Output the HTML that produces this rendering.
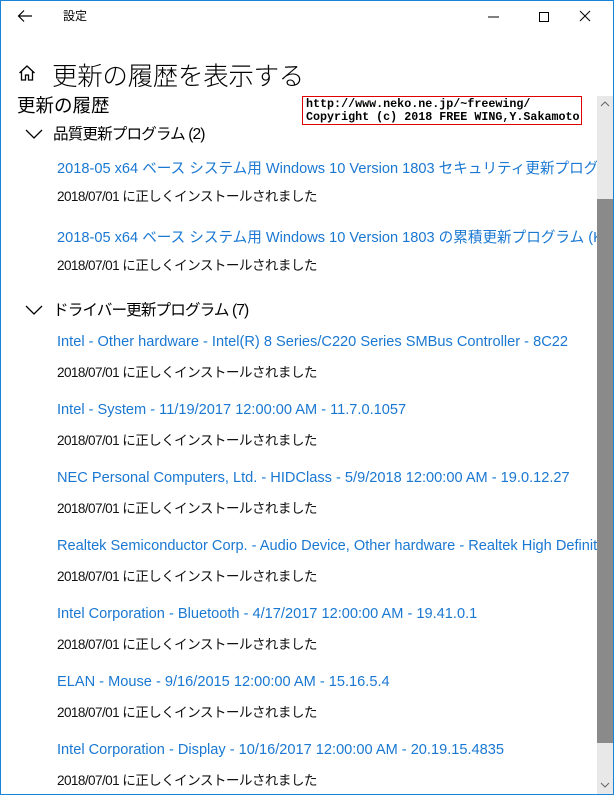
<!DOCTYPE html>
<html><head><meta charset="utf-8"><style>
*{margin:0;padding:0;box-sizing:border-box}
body{width:614px;height:795px;overflow:hidden;background:#fff;font-family:"Segoe UI","Liberation Sans","Noto Sans CJK JP",sans-serif;position:relative;color:#000}
.frame{position:absolute;left:0;top:0;width:614px;height:795px;border:1px solid #1883d7}
.a{position:absolute;white-space:nowrap}
.link{color:#1a78d2;font-size:14.6px;left:57px}
.st{font-size:13.6px;letter-spacing:-0.6px;left:57px;color:#111}
.hdr{font-size:15.6px;letter-spacing:-0.9px;left:53px}
</style></head><body>
<div class="frame"></div>
<svg class="a" style="left:17px;top:9px" width="16" height="14"><path d="M15 7H2M7 1.5L1.5 7L7 12.5" fill="none" stroke="#000" stroke-width="1.2"/></svg>
<div class="a" style="left:63px;top:7px;font-size:12px">設定</div>
<svg class="a" style="left:484px;top:10px" width="100" height="14"><path d="M4 7h11" stroke="#000" stroke-width="1"/><rect x="55.5" y="2.5" width="9" height="9" fill="none" stroke="#000"/></svg>
<svg class="a" style="left:579px;top:10px" width="12" height="12"><path d="M1 1L11 11M11 1L1 11" stroke="#000" stroke-width="1"/></svg>
<svg class="a" style="left:18px;top:64px" width="18" height="18"><path d="M1.5 9L9 2L16.5 9M3.5 7.5V16H7.5V11H10.5V16H14.5V7.5" fill="none" stroke="#000" stroke-width="1.3"/></svg>
<div class="a" style="left:52px;top:56px;font-size:25.5px;font-weight:300;letter-spacing:-0.3px">更新の履歴を表示する</div>
<div class="a" style="left:17px;top:92px;font-size:18.5px">更新の履歴</div>
<div class="a" style="left:302px;top:96px;width:280px;height:29px;border:1px solid #e00000;background:#fff;font-family:'Liberation Mono',monospace;font-size:11.7px;font-weight:bold;line-height:13px;padding:1px 3px">http://www.neko.ne.jp/~freewing/<br>Copyright (c) 2018 FREE WING,Y.Sakamoto</div>
<div class="a" style="left:597px;top:96px;width:16px;height:698px;background:#e8e8e8"></div>
<div class="a" style="left:597px;top:199px;width:16px;height:544px;background:#8a8a8a"></div>
<svg class="a" style="left:600px;top:100px" width="10" height="8"><path d="M1 6L5 2L9 6" fill="none" stroke="#666"/></svg>
<svg class="a" style="left:600px;top:781px" width="10" height="8"><path d="M1 2L5 6L9 2" fill="none" stroke="#666"/></svg>
<div style="position:absolute;left:0;top:0;width:597px;height:795px;overflow:hidden">
<svg class="a" style="left:25px;top:128px" width="18" height="12"><path d="M1 2L9 10L17 2" fill="none" stroke="#000" stroke-width="1.3"/></svg>
<div class="a hdr" style="top:122px">品質更新プログラム (2)</div>
<div class="a link" style="top:157px">2018-05 x64 ベース システム用 Windows 10 Version 1803 セキュリティ更新プログラム (Adobe Flash Player)</div>
<div class="a st" style="top:185px">2018/07/01 に正しくインストールされました</div>
<div class="a link" style="top:226px">2018-05 x64 ベース システム用 Windows 10 Version 1803 の累積更新プログラム (KB4100403)</div>
<div class="a st" style="top:254px">2018/07/01 に正しくインストールされました</div>
<svg class="a" style="left:25px;top:304px" width="18" height="12"><path d="M1 2L9 10L17 2" fill="none" stroke="#000" stroke-width="1.3"/></svg>
<div class="a hdr" style="top:298px">ドライバー更新プログラム (7)</div>
<div class="a link" style="top:334px">Intel - Other hardware - Intel(R) 8 Series/C220 Series SMBus Controller - 8C22</div>
<div class="a st" style="top:361px">2018/07/01 に正しくインストールされました</div>
<div class="a link" style="top:402px">Intel - System - 11/19/2017 12:00:00 AM - 11.7.0.1057</div>
<div class="a st" style="top:429px">2018/07/01 に正しくインストールされました</div>
<div class="a link" style="top:470px">NEC Personal Computers, Ltd. - HIDClass - 5/9/2018 12:00:00 AM - 19.0.12.27</div>
<div class="a st" style="top:497px">2018/07/01 に正しくインストールされました</div>
<div class="a link" style="top:538px">Realtek Semiconductor Corp. - Audio Device, Other hardware - Realtek High Definition Audio</div>
<div class="a st" style="top:565px">2018/07/01 に正しくインストールされました</div>
<div class="a link" style="top:606px">Intel Corporation - Bluetooth - 4/17/2017 12:00:00 AM - 19.41.0.1</div>
<div class="a st" style="top:633px">2018/07/01 に正しくインストールされました</div>
<div class="a link" style="top:674px">ELAN - Mouse - 9/16/2015 12:00:00 AM - 15.16.5.4</div>
<div class="a st" style="top:701px">2018/07/01 に正しくインストールされました</div>
<div class="a link" style="top:742px">Intel Corporation - Display - 10/16/2017 12:00:00 AM - 20.19.15.4835</div>
<div class="a st" style="top:769px">2018/07/01 に正しくインストールされました</div>
</div>
</body></html>
